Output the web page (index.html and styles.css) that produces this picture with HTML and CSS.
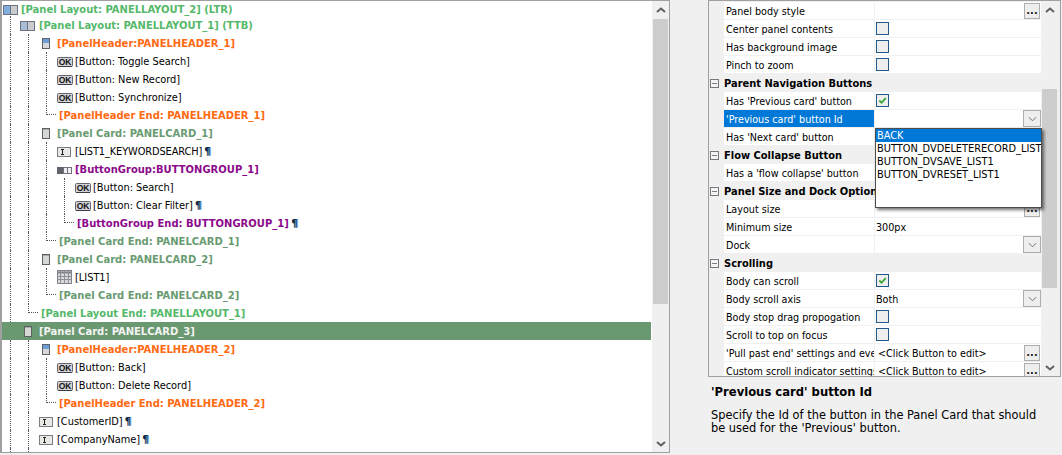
FILE: index.html
```html
<!DOCTYPE html>
<html lang="en">
<head>
<meta charset="utf-8">
<title>Panel tree</title>
<link rel="stylesheet" href="styles.css">
</head>
<body>
<svg class="defs" aria-hidden="true">
  <symbol id="layoutA" viewBox="0 0 18 18">
    <rect x="1.5" y="5.5" width="14" height="9" fill="#d8dadc" stroke="#6d7280"/><rect x="2" y="6" width="6" height="8" fill="#7fb0e0"/><rect x="9" y="6" width="6" height="8" fill="#c9cbcc"/><path d="M8.5 5v10" stroke="#6d7280"/>
  </symbol>
  <symbol id="layoutB" viewBox="0 0 18 18">
    <rect x="0.5" y="5.5" width="14" height="9" fill="#d8dadc" stroke="#6d7280"/><rect x="1" y="6" width="6" height="8" fill="#a9bdd4"/><rect x="8" y="6" width="6" height="8" fill="#c9cbcc"/><path d="M7.5 5v10" stroke="#6d7280"/>
  </symbol>
  <symbol id="hdr" viewBox="0 0 18 18">
    <rect x="4.5" y="4.5" width="7" height="10" fill="#d6d8da" stroke="#5d6269"/><rect x="5" y="5" width="6" height="4" fill="#6f9ed6"/>
  </symbol>
  <symbol id="card" viewBox="0 0 18 18">
    <rect x="4.5" y="4.5" width="7" height="10" fill="#d6d8d6" stroke="#5d6261"/><rect x="5" y="5" width="6" height="1" fill="#a9aba9"/>
  </symbol>
  <symbol id="ok" viewBox="0 0 18 18">
    <rect x="1.5" y="5.5" width="15" height="9" rx="1" fill="#d2d2d8" stroke="#65656f"/><path d="M2 14.5h14" stroke="#3c3c44"/><text x="9" y="13" text-anchor="middle" font-family="Liberation Sans, sans-serif" font-weight="700" font-size="8.5" fill="#111">OK</text>
  </symbol>
  <symbol id="input" viewBox="0 0 18 18">
    <rect x="1.5" y="5.5" width="13" height="9" fill="#e8e8e4" stroke="#7b7b80"/><path d="M5 7.500h3M5 12.500h3M6.500 7.500v5" stroke="#222" fill="none"/>
  </symbol>
  <symbol id="group" viewBox="0 0 18 18">
    <rect x="1.500" y="7.500" width="14" height="6" fill="#eeeef2" stroke="#6f727a"/><rect x="1" y="7" width="6" height="7" fill="#5f626a"/><path d="M7.500 8v5M11.500 8v5" stroke="#70737a"/>
  </symbol>
  <symbol id="grid" viewBox="0 0 18 18">
    <rect x="1.5" y="2.500" width="14" height="13" fill="#d9d9d9" stroke="#80838a"/><path d="M1.500 4.500h14" stroke="#80838a" stroke-width="2"/><path d="M1.500 8.500h14M1.500 11.500h14M4.500 3v12M8.500 3v12M12.500 3v12" stroke="#8d9096"/>
  </symbol>
  <symbol id="up" viewBox="0 0 10 6"><path d="M1 5l4-3.500 4 3.500" fill="none" stroke="#606060" stroke-width="2"/></symbol>
  <symbol id="down" viewBox="0 0 10 6"><path d="M1 1l4 3.500 4-3.500" fill="none" stroke="#606060" stroke-width="2"/></symbol>
  <symbol id="chev" viewBox="0 0 10 6"><path d="M1 1l4 4 4-4" fill="none" stroke="#606060" stroke-width="1"/></symbol>
  <symbol id="tick" viewBox="0 0 12 12"><path d="M2.500 6l2.500 2.500 4.500-5" fill="none" stroke="#3aa535" stroke-width="2"/></symbol>
</svg>

<main class="page">
  <section class="treepanel">
    <div class="tree">
      <div class="row first"><svg class="ic"><use href="#layoutA"/></svg><span class="t b green">[Panel Layout: PANELLAYOUT_2] (LTR)</span></div>
      <div class="row"><i class="g"></i><svg class="ic"><use href="#layoutB"/></svg><span class="t b green">[Panel Layout: PANELLAYOUT_1] (TTB)</span></div>
      <div class="row"><i class="g"></i><i class="g"></i><svg class="ic"><use href="#hdr"/></svg><span class="t b orange">[PanelHeader:PANELHEADER_1]</span></div>
      <div class="row"><i class="g"></i><i class="g"></i><i class="g"></i><svg class="ic"><use href="#ok"/></svg><span class="t">[Button: Toggle Search]</span></div>
      <div class="row"><i class="g"></i><i class="g"></i><i class="g"></i><svg class="ic"><use href="#ok"/></svg><span class="t">[Button: New Record]</span></div>
      <div class="row"><i class="g"></i><i class="g"></i><i class="g"></i><svg class="ic"><use href="#ok"/></svg><span class="t">[Button: Synchronize]</span></div>
      <div class="row"><i class="g"></i><i class="g"></i><i class="e"></i><span class="t end b orange">[PanelHeader End: PANELHEADER_1]</span></div>
      <div class="row"><i class="g"></i><i class="g"></i><svg class="ic"><use href="#card"/></svg><span class="t b sage">[Panel Card: PANELCARD_1]</span></div>
      <div class="row"><i class="g"></i><i class="g"></i><i class="g"></i><svg class="ic"><use href="#input"/></svg><span class="t caps">[LIST1_KEYWORDSEARCH] <b class="p">¶</b></span></div>
      <div class="row"><i class="g"></i><i class="g"></i><i class="g"></i><svg class="ic"><use href="#group"/></svg><span class="t b purple">[ButtonGroup:BUTTONGROUP_1]</span></div>
      <div class="row"><i class="g"></i><i class="g"></i><i class="g"></i><i class="g"></i><svg class="ic"><use href="#ok"/></svg><span class="t">[Button: Search]</span></div>
      <div class="row"><i class="g"></i><i class="g"></i><i class="g"></i><i class="g"></i><svg class="ic"><use href="#ok"/></svg><span class="t">[Button: Clear Filter] <b class="p">¶</b></span></div>
      <div class="row"><i class="g"></i><i class="g"></i><i class="g"></i><i class="e"></i><span class="t end b purple">[ButtonGroup End: BUTTONGROUP_1] <b class="p">¶</b></span></div>
      <div class="row"><i class="g"></i><i class="g"></i><i class="e"></i><span class="t end b sage">[Panel Card End: PANELCARD_1]</span></div>
      <div class="row"><i class="g"></i><i class="g"></i><svg class="ic"><use href="#card"/></svg><span class="t b sage">[Panel Card: PANELCARD_2]</span></div>
      <div class="row"><i class="g"></i><i class="g"></i><i class="g"></i><svg class="ic"><use href="#grid"/></svg><span class="t">[LIST1]</span></div>
      <div class="row"><i class="g"></i><i class="g"></i><i class="e"></i><span class="t end b sage">[Panel Card End: PANELCARD_2]</span></div>
      <div class="row"><i class="g"></i><i class="e"></i><span class="t end b green">[Panel Layout End: PANELLAYOUT_1]</span></div>
      <div class="row sel"><i class="g none"></i><svg class="ic"><use href="#card"/></svg><span class="t b">[Panel Card: PANELCARD_3]</span></div>
      <div class="row"><i class="g"></i><i class="g"></i><svg class="ic"><use href="#hdr"/></svg><span class="t b orange">[PanelHeader:PANELHEADER_2]</span></div>
      <div class="row"><i class="g"></i><i class="g"></i><i class="g"></i><svg class="ic"><use href="#ok"/></svg><span class="t">[Button: Back]</span></div>
      <div class="row"><i class="g"></i><i class="g"></i><i class="g"></i><svg class="ic"><use href="#ok"/></svg><span class="t">[Button: Delete Record]</span></div>
      <div class="row"><i class="g"></i><i class="g"></i><i class="e"></i><span class="t end b orange">[PanelHeader End: PANELHEADER_2]</span></div>
      <div class="row"><i class="g"></i><i class="g"></i><svg class="ic"><use href="#input"/></svg><span class="t">[CustomerID] <b class="p">¶</b></span></div>
      <div class="row"><i class="g"></i><i class="g"></i><svg class="ic"><use href="#input"/></svg><span class="t">[CompanyName] <b class="p">¶</b></span></div>
      <div class="row"><i class="g"></i><i class="g"></i></div>
    </div>
    <div class="sbar tree-sbar">
      <svg class="arrow"><use href="#up"/></svg>
      <div class="thumb tree-thumb"></div>
      <svg class="arrow bottom"><use href="#down"/></svg>
    </div>
  </section>

  <aside class="side">
    <section class="props">
      <div class="grid">
        <div class="prop"><span class="name">Panel body style</span><span class="val"><button class="more">...</button></span></div>
        <div class="prop"><span class="name">Center panel contents</span><span class="val"><i class="cb"></i></span></div>
        <div class="prop"><span class="name">Has background image</span><span class="val"><i class="cb"></i></span></div>
        <div class="prop"><span class="name">Pinch to zoom</span><span class="val"><i class="cb"></i></span></div>
        <div class="cat"><i class="minus"></i><span>Parent Navigation Buttons</span></div>
        <div class="prop"><span class="name">Has 'Previous card' button</span><span class="val"><i class="cb"><svg class="tick"><use href="#tick"/></svg></i></span></div>
        <div class="prop"><span class="name on">'Previous card' button Id</span><span class="val"><button class="pick"><svg class="chev"><use href="#chev"/></svg></button></span></div>
        <div class="prop"><span class="name">Has 'Next card' button</span><span class="val"></span></div>
        <div class="cat"><i class="minus"></i><span>Flow Collapse Button</span></div>
        <div class="prop"><span class="name">Has a 'flow collapse' button</span><span class="val"></span></div>
        <div class="cat"><i class="minus"></i><span>Panel Size and Dock Options</span></div>
        <div class="prop"><span class="name">Layout size</span><span class="val"><button class="more">...</button></span></div>
        <div class="prop"><span class="name">Minimum size</span><span class="val"><span class="v">300px</span></span></div>
        <div class="prop"><span class="name">Dock</span><span class="val"><button class="pick"><svg class="chev"><use href="#chev"/></svg></button></span></div>
        <div class="cat"><i class="minus"></i><span>Scrolling</span></div>
        <div class="prop"><span class="name">Body can scroll</span><span class="val"><i class="cb"><svg class="tick"><use href="#tick"/></svg></i></span></div>
        <div class="prop"><span class="name">Body scroll axis</span><span class="val"><span class="v">Both</span><button class="pick"><svg class="chev"><use href="#chev"/></svg></button></span></div>
        <div class="prop"><span class="name">Body stop drag propogation</span><span class="val"><i class="cb"></i></span></div>
        <div class="prop"><span class="name">Scroll to top on focus</span><span class="val"><i class="cb"></i></span></div>
        <div class="prop"><span class="name">'Pull past end' settings and events</span><span class="val"><span class="v wide">&lt;Click Button to edit&gt;</span><button class="more">...</button></span></div>
        <div class="prop"><span class="name">Custom scroll indicator settings</span><span class="val"><span class="v wide">&lt;Click Button to edit&gt;</span><button class="more">...</button></span></div>
      </div>
      <div class="sbar prop-sbar">
        <svg class="arrow"><use href="#up"/></svg>
        <div class="thumb prop-thumb"></div>
        <svg class="arrow bottom"><use href="#down"/></svg>
      </div>
      <ul class="drop">
        <li class="hit">BACK</li>
        <li>BUTTON_DVDELETERECORD_LIST1</li>
        <li>BUTTON_DVSAVE_LIST1</li>
        <li>BUTTON_DVRESET_LIST1</li>
      </ul>
    </section>
    <section class="help">
      <h2>'Previous card' button Id</h2>
      <p>Specify the Id of the button in the Panel Card that should be used for the 'Previous' button.</p>
    </section>
  </aside>
</main>
</body>
</html>
```

FILE: styles.css
```css
* { box-sizing: border-box; }
html, body { margin: 0; padding: 0; height: 100%; }
body {
  background: #f0f0f0;
  color: #000;
  font: 10.9px/18px "DejaVu Sans Condensed", "Liberation Sans", sans-serif;
  overflow: hidden;
}
.defs { width: 0; height: 0; display: block; overflow: hidden; }
.page { display: flex; align-items: flex-start; }

/* left tree */
.treepanel {
  width: 670px;
  height: 453px;
  display: flex;
  background: #fff;
  border: solid #a0a0a0;
  border-width: 1px 1px 1px 2px;
  overflow: hidden;
}
.tree { width: 649px; flex: none; margin-right: 1px; overflow: hidden; }
.row { height: 18px; display: flex; align-items: center; white-space: nowrap; }
.row.first { height: 15px; }
.g {
  flex: none;
  align-self: stretch;
  width: 10px;
  margin: 0 0 0 8px;
  border-left: 1px dotted #555;
}
.g.none { border-left: 0; }
.e {
  flex: none;
  align-self: flex-start;
  width: 10px;
  height: 9px;
  margin-left: 8px;
  border-left: 1px dotted #555;
  border-bottom: 1px dotted #555;
}
.ic { flex: none; width: 18px; height: 18px; margin-right: 1px; }
.t { padding-top: 2px; }
.t.end { margin-left: 3px; }
.t.caps { letter-spacing: -.1px; }
.b { font-weight: 700; font-size: 11.1px; }
.green { color: #55b86a; }
.orange { color: #ff6a13; }
.sage { color: #699b72; }
.purple { color: #8b0a8b; }
.sel { background: #6a9870; color: #f4f4f4; }
.p { margin-left: -1px; font-weight: 700; color: #10283f; text-shadow: 1px 0 0 #5d9fe0; }

/* scrollbars */
.sbar { flex: none; width: 17px; display: flex; flex-direction: column; align-items: center; background: #f0f0f0; }
.arrow { flex: none; width: 10px; height: 6px; margin: 6px 0 5px; }
.arrow.bottom { margin: auto 0 5px; }
.thumb { flex: none; width: 15px; background: #cdcdcd; margin-right: 1px; }
.tree-thumb { height: 285px; margin-top: 1px; }
.prop-sbar { width: 18px; }
.prop-thumb { height: 199px; margin-top: 71px; }

/* right column */
.side { width: 353px; margin-left: 38px; }
.props {
  position: relative;
  display: flex;
  height: 377px;
  background: #f0f0f0;
  border: 1px solid #a0a0a0;
  overflow: hidden;
  font-size: 10.7px;
}
.grid { width: 332px; flex: none; padding-top: 1px; }
.prop { height: 18px; display: flex; margin-left: 15px; background: #f0f0f0; }
.name {
  width: 150px;
  height: 17px;
  flex: none;
  padding: 1px 0 0 2px;
  line-height: 17px;
  background: #fff;
  white-space: nowrap;
  overflow: hidden;
}
.name.on { background: #0078d7; color: #fff; }
.val {
  flex: 1;
  height: 17px;
  margin-left: 1px;
  background: #fff;
  display: flex;
  align-items: center;
  line-height: 17px;
}
.v { padding: 1px 0 0 1px; white-space: nowrap; }
.v.wide { padding-left: 3px; }
.cat {
  height: 18px;
  padding-top: 1px;
  display: flex;
  align-items: center;
  font: 700 11px/17px "DejaVu Sans Condensed", sans-serif;
  white-space: nowrap;
  background: #f0f0f0;
  overflow: hidden;
}
.minus {
  flex: none;
  width: 9px;
  height: 9px;
  margin: 0 5px 0 1px;
  border: 1px solid #77777d;
  background: linear-gradient(#7c7c82, #7c7c82) center / 5px 1px no-repeat #f4f4f4;
}
.cb {
  flex: none;
  width: 13px;
  height: 13px;
  margin-left: 1px;
  display: block;
  background: #eeeeee;
  border: 1px solid #23588a;
}
.tick { display: block; width: 11px; height: 11px; }
.more, .pick {
  flex: none;
  margin: 0 0 0 auto;
  padding: 0;
  background: #eeeeee;
  border: 1px solid #adadad;
  color: #222;
  font: 700 11px/9px "DejaVu Sans Condensed", sans-serif;
}
.more { width: 16px; height: 16px; margin-right: 1px; }
.pick { width: 18px; height: 17px; display: flex; align-items: center; justify-content: center; }
.chev { width: 9px; height: 6px; }

.drop {
  position: absolute;
  left: 166px;
  top: 127px;
  width: 167px;
  height: 80px;
  margin: 0;
  padding: 0;
  list-style: none;
  background: #fff;
  border: 1px solid #4d4d4d;
  box-shadow: 2px 2px 3px rgba(0, 0, 0, .55);
  overflow: hidden;
  font-size: 10.9px;
  line-height: 13px;
  white-space: nowrap;
}
.drop li { height: 13px; padding-left: 1px; }
.drop .hit { background: #0078d7; color: #fff; }

.help { padding: 7px 20px 0 3px; font: 11.4px/13px "DejaVu Sans", sans-serif; }
.help h2 { margin: 0; font: 700 11.6px/16px "DejaVu Sans", sans-serif; }
.help p { margin: 9px 0 0; }
```
